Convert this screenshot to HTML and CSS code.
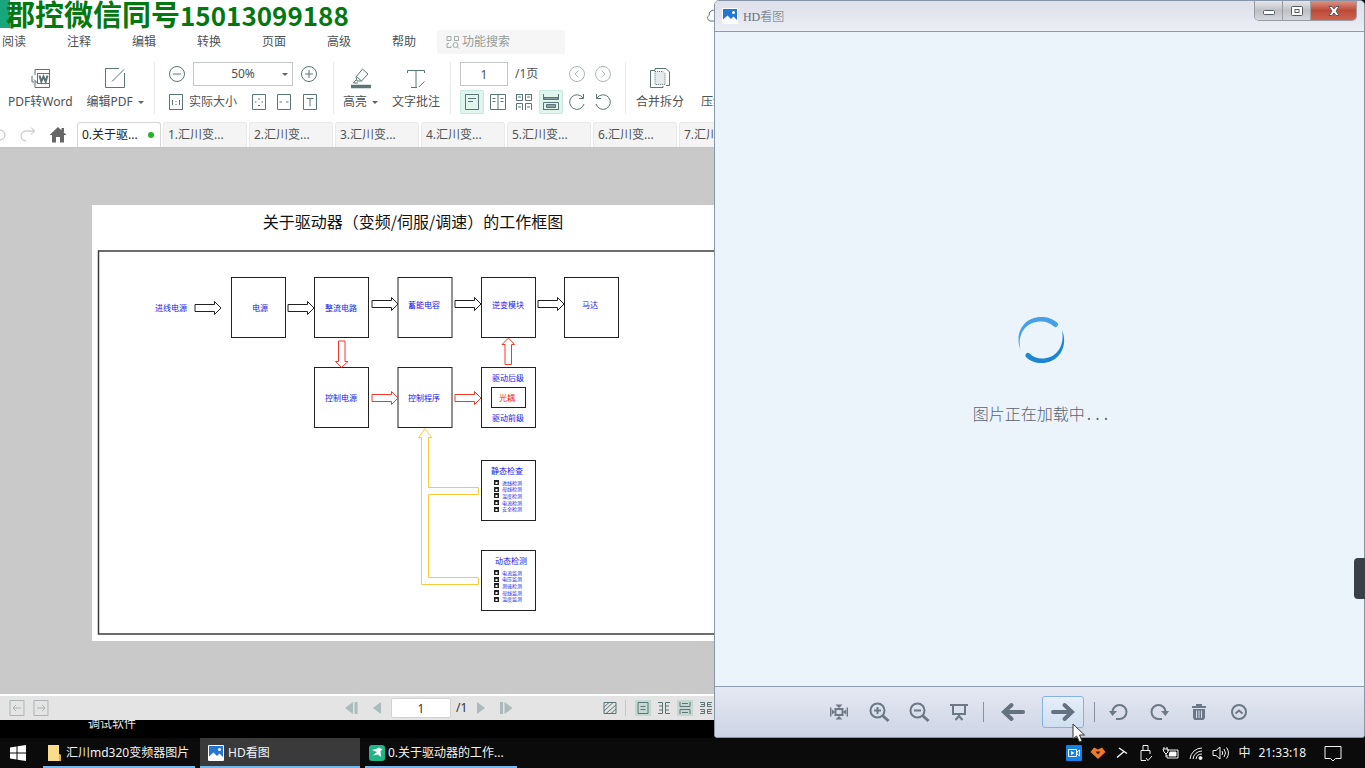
FILE: index.html
```html
<!DOCTYPE html>
<html lang="zh-CN">
<head>
<meta charset="utf-8">
<title>HD看图</title>
<link rel="stylesheet" href="styles.css">
</head>
<body>
<svg class="defs" aria-hidden="true">
  <defs>
    <symbol id="arrow" viewBox="0 0 28 16"><path d="M1 4.5H20.500V1.500L27 8L20.500 14.500V11.500H1Z"/></symbol>
    <symbol id="picture" viewBox="0 0 16 16"><rect fill="#fff" x="0" y="0" width="16" height="16" rx="1"/><path fill="#2377d0" d="M1 1H15V12L11.500 8.500L9 11L5.500 7.500L1 11.500Z"/><circle fill="#fff" cx="11.500" cy="4.500" r="1.500"/></symbol>
  </defs>
</svg>
<main class="desktop">
  <span class="desktop-label">调试软件</span>

  <section class="pdf">
    <header class="pdf-title">
      <span class="pdf-brand"></span>
      <h1 class="banner">郡控微信同号<span class="banner-num">15013099188</span></h1>
      <svg class="cloud" width="14" height="14" viewBox="0 0 14 14"><path d="M14 12H4A3 3 0 0 1 3 6.500A5 5 0 0 1 12 3"/></svg>
    </header>
    <nav class="menu">
      <a href="#">阅读</a><a href="#">注释</a><a href="#">编辑</a><a href="#">转换</a><a href="#">页面</a><a href="#">高级</a><a href="#">帮助</a>
      <label class="search">
        <svg width="14" height="14" viewBox="0 0 14 14"><path d="M1 1.500H5V5.500H1ZM8.500 1.500H12.500V5.500H8.500ZM3 8.500H1V12.500H5V11M11 11.500L13 13.500"/><circle cx="9.500" cy="10" r="2.500"/></svg>
        <input type="text" placeholder="功能搜索" aria-label="功能搜索">
      </label>
    </nav>
    <div class="tools">
      <div class="group g-file">
        <button class="big"><svg width="24" height="24" viewBox="0 0 24 24"><path d="M7 9V3.500H21.500V21.500H7V18M4 10V16H8M6 13.500L8.500 16L6 18.500"/><rect x="9.500" y="7.500" width="12" height="10" fill="#fff"/><path stroke-width="2" d="M11.500 9.500L13.300 15.500L15.500 10.500L17.700 15.500L19.500 9.500"/></svg><span>PDF转Word</span></button>
        <button class="big"><svg width="24" height="24" viewBox="0 0 24 24"><path d="M16 2.500H2.500V21.500H21.500V7M9 15.500L21 3.500"/></svg><span>编辑PDF <i class="caret"></i></span></button>
      </div>
      <div class="group g-zoom rows">
        <div class="row">
          <button aria-label="缩小"><svg width="18" height="18" viewBox="0 0 18 18"><circle cx="9" cy="9" r="7.500"/><path d="M5 9H13"/></svg></button>
          <span class="zoom"><select aria-label="缩放"><option>50%</option></select><i class="caret"></i></span>
          <button aria-label="放大"><svg width="18" height="18" viewBox="0 0 18 18"><circle cx="9" cy="9" r="7.500"/><path d="M5 9H13M9 5V13"/></svg></button>
        </div>
        <div class="row">
          <button class="actual"><svg width="16" height="16" viewBox="0 0 16 16"><path d="M1.500 .5H14.500V15.500H1.500ZM4.500 6V11M11.500 6V11M8 7V8M8 10V11"/></svg>实际大小</button>
          <button aria-label="适合页面"><svg width="16" height="16" viewBox="0 0 16 16"><path d="M1.500 .5H14.500V15.500H1.500ZM7 5H9M7 11.500H9M4 8H5.500M10.500 8H12"/></svg></button>
          <button aria-label="适合宽度"><svg width="16" height="16" viewBox="0 0 16 16"><path d="M1.500 .5H14.500V15.500H1.500ZM3.500 8H6M10 8H12.500"/></svg></button>
          <button aria-label="适合文字"><svg width="16" height="16" viewBox="0 0 16 16"><path d="M1.500 .5H14.500V15.500H1.500ZM4.500 4.500H11.500M8 4.500V12.500"/></svg></button>
        </div>
      </div>
      <div class="group g-mark">
        <button class="big"><svg width="24" height="24" viewBox="0 0 24 24"><path d="M7 11L13.500 3L19 8L12.500 15H8ZM8 11L12.500 15M7 14L4.500 17H9"/><path stroke-width="3.500" d="M2 20.500H22"/></svg><span>高亮 <i class="caret"></i></span></button>
        <button class="big"><svg width="24" height="24" viewBox="0 0 24 24"><path d="M3.500 7V4.500H20.500V7M12 4.500V21.500M7 21.500H13M15 21L20.500 15.500"/></svg><span>文字批注</span></button>
      </div>
      <div class="group g-page rows">
        <div class="row">
          <input class="page-no" type="text" value="1" aria-label="页码"><span class="page-total">/1页</span>
          <span class="turns">
            <button class="faint" aria-label="上一页"><svg width="18" height="18" viewBox="0 0 18 18"><circle cx="9" cy="9" r="7.500"/><path d="M10.500 5.500L7 9L10.500 12.500"/></svg></button>
            <button class="faint" aria-label="下一页"><svg width="18" height="18" viewBox="0 0 18 18"><circle cx="9" cy="9" r="7.500"/><path d="M7.500 5.500L11 9L7.500 12.500"/></svg></button>
          </span>
        </div>
        <div class="row modes">
          <button class="on" aria-label="单页"><svg width="16" height="18" viewBox="0 0 16 18"><path d="M1.500 1.500H14.500V16.500H1.500ZM4 5.500H12M4 8.500H9"/></svg></button>
          <button aria-label="双页"><svg width="18" height="18" viewBox="0 0 18 18"><path d="M1.500 1.500H16.500V16.500H1.500ZM9 1.500V16.500M3.500 5.500H6.500M3.500 8.500H6.500M11.500 5.500H14.500M11.500 8.500H14.500"/></svg></button>
          <button aria-label="双页连续"><svg width="18" height="18" viewBox="0 0 18 18"><path d="M1.500 1V7.500H7.500V1M10.500 1V7.500H16.500V1M1.500 17V10.500H7.500V17M10.500 17V10.500H16.500V17M3 4H6M12 4H15M3 14H6M12 14H15M1 1.500H8M10 1.500H17"/></svg></button>
          <button class="on" aria-label="连续"><svg width="18" height="18" viewBox="0 0 18 18"><path d="M1.500 1V6.500H16.500V1M1.500 17V9.500H16.500V17M1.500 16.500H16.500"/><path fill="#8aa3a2" d="M2 4.500H16V6.500H2ZM4.500 11.500H13.500V14.500H4.500Z"/></svg></button>
          <button aria-label="顺时针"><svg width="18" height="18" viewBox="0 0 18 18"><path d="M15 5A7.300 7.300 0 1 0 16 11M15.500 1V5.500H11"/></svg></button>
          <button aria-label="逆时针"><svg width="18" height="18" viewBox="0 0 18 18"><path d="M3 5A7.300 7.300 0 1 1 2 11M2.500 1V5.500H7"/></svg></button>
        </div>
      </div>
      <div class="group g-merge">
        <button class="big"><svg width="24" height="24" viewBox="0 0 24 24"><path d="M7 4V2.500H18L21.500 6V19.500H18M7 4.500H2.500V21.500H15V20"/><path fill="#e6eaea" stroke-dasharray="1 1" d="M7 5.500H15L17 7.500V18.500H7Z"/></svg><span>合并拆分</span></button>
        <button class="big"><svg width="24" height="24" viewBox="0 0 24 24"></svg><span>压缩</span></button>
      </div>
    </div>
    <div class="tabs">
      <button aria-label="撤销" class="undo"><svg width="6" height="18" viewBox="0 0 6 18"><path d="M0 4A5 5 0 0 1 0 14"/></svg></button>
      <button aria-label="重做" class="redo"><svg width="18" height="18" viewBox="0 0 18 18"><path d="M16 5H8A5 5 0 0 0 8 15M13 1.500L16.500 5L13 8.500"/></svg></button>
      <button aria-label="首页" class="home"><svg width="18" height="18" viewBox="0 0 18 18"><path d="M9 1L17.500 9H15V16.500H11V11H7V16.500H3V9H.5ZM12.500 2H15V6H12.500Z"/></svg></button>
      <a class="tab active" href="#">0.关于驱...<i class="dot"></i></a>
      <a class="tab" href="#">1.汇川变...</a>
      <a class="tab" href="#">2.汇川变...</a>
      <a class="tab" href="#">3.汇川变...</a>
      <a class="tab" href="#">4.汇川变...</a>
      <a class="tab" href="#">5.汇川变...</a>
      <a class="tab" href="#">6.汇川变...</a>
      <a class="tab" href="#">7.汇川变...</a>
    </div>
    <div class="canvas">
      <svg class="sheet" width="640" height="436" viewBox="92 205 640 436">
        <text class="t-title" x="413" y="228">关于驱动器（变频/伺服/调速）的工作框图</text>
        <rect class="frame" x="98.500" y="251" width="650" height="383"/>
        <g class="box">
          <rect x="231.500" y="277.500" width="54" height="60"/>
          <rect x="314.500" y="277.500" width="54" height="60"/>
          <rect x="398" y="277.500" width="54" height="60"/>
          <rect x="481.500" y="277.500" width="54" height="60"/>
          <rect x="564.500" y="277.500" width="54" height="60"/>
          <rect x="314.500" y="367.500" width="54" height="60"/>
          <rect x="398" y="367.500" width="54" height="60"/>
          <rect x="481.500" y="367.500" width="54" height="60"/>
          <rect x="491.500" y="387.500" width="34" height="20"/>
          <rect x="481.500" y="460.500" width="54" height="60"/>
          <rect x="481.500" y="550.500" width="54" height="60"/>
          <use href="#arrow" x="194" y="300" width="28" height="16"/>
          <use href="#arrow" x="287" y="300" width="28" height="16"/>
          <use href="#arrow" x="371" y="296" width="28" height="16"/>
          <use href="#arrow" x="454" y="296" width="28" height="16"/>
          <use href="#arrow" x="537" y="296" width="28" height="16"/>
        </g>
        <g class="red">
          <use href="#arrow" x="371" y="390" width="28" height="16"/>
          <use href="#arrow" x="454" y="390" width="28" height="16"/>
          <path d="M338.500 341V361.500H335.500L341.500 367.500L348 361.500H345V341Z"/>
          <path d="M505 364.500V344.500H502L508.500 338L514.500 344.500H511.500V364.500Z"/>
        </g>
        <path class="yellow" d="M425 428.500L431.500 437.500H428.500V487.500H478.500V494.500H428.500V577.500H478.500V584.500H421.500V437.500H418.500Z"/>
        <g class="t-node">
          <text x="171" y="311">进线电源</text><text x="260" y="311">电源</text><text x="341" y="311">整流电路</text>
          <text x="424" y="308">蓄能电容</text><text x="508" y="308">逆变模块</text><text x="590" y="308">马达</text>
          <text x="341" y="401">控制电源</text><text x="424" y="401">控制程序</text>
          <text x="508" y="381">驱动后级</text><text class="t-red" x="507" y="401">光耦</text><text x="508" y="421">驱动前级</text>
          <text x="507" y="474">静态检查</text><text x="511" y="564">动态检测</text>
        </g>
        <path class="ticks" d="M494 480h5v5h-5zM494 487h5v5h-5zM494 493h5v5h-5zM494 500h5v5h-5zM494 507h5v5h-5zM494 570h5v5h-5zM494 577h5v5h-5zM494 583h5v5h-5zM494 590h5v5h-5zM494 597h5v5h-5z"/>
        <path class="tick-holes" d="M495.500 482h2v2h-2zM495.500 489h2v2h-2zM495.500 495h2v2h-2zM495.500 502h2v2h-2zM495.500 509h2v2h-2zM495.500 572h2v2h-2zM495.500 579h2v2h-2zM495.500 585h2v2h-2zM495.500 592h2v2h-2zM495.500 599h2v2h-2z"/>
        <g class="t-item">
          <text x="502" y="485">进线检测</text><text x="502" y="491">母线检测</text><text x="502" y="498">温度检测</text><text x="502" y="505">电流检测</text><text x="502" y="511">安全检测</text>
          <text x="502" y="575">电流监测</text><text x="502" y="581">电压监测</text><text x="502" y="588">测速检测</text><text x="502" y="595">母线监测</text><text x="502" y="601">温度监测</text>
        </g>
      </svg>
    </div>
    <footer class="status">
      <div class="st-left">
        <button aria-label="后退"><svg width="16" height="16" viewBox="0 0 16 16"><path d="M1 .5H15V15.500H1ZM12 8H4M7 5L4 8L7 11"/></svg></button>
        <button aria-label="前进"><svg width="16" height="16" viewBox="0 0 16 16"><path d="M1 .5H15V15.500H1ZM4 8H12M9 5L12 8L9 11"/></svg></button>
      </div>
      <div class="st-nav">
        <button aria-label="首页"><svg width="14" height="12" viewBox="0 0 14 12"><path d="M8 0V12L0 6ZM9.500 0H12.500V12H9.500Z"/></svg></button>
        <button aria-label="上一页"><svg width="10" height="12" viewBox="0 0 10 12"><path d="M9 0V12L1 6Z"/></svg></button>
        <span class="st-page"><input type="text" value="1" aria-label="当前页">/1</span>
        <button aria-label="下一页"><svg width="10" height="12" viewBox="0 0 10 12"><path d="M1 0V12L9 6Z"/></svg></button>
        <button aria-label="末页"><svg width="14" height="12" viewBox="0 0 14 12"><path d="M5.500 0V12L13.500 6ZM1 0H4V12H1Z"/></svg></button>
      </div>
      <div class="st-view">
        <button class="hatch" aria-label="背景"><svg width="14" height="14" viewBox="0 0 14 14"><path d="M1 1.500H13V12.500H1ZM1 6L6 1.500M1 10L10 1.500M3 12.500L13 4M8 12.500L13 8"/></svg></button>
        <button class="on" aria-label="单页"><svg width="14" height="14" viewBox="0 0 14 14"><path d="M2 1.500H12V12.500H2ZM4.500 5.500H9.500M4.500 8.500H9.500"/></svg></button>
        <button aria-label="双页"><svg width="14" height="14" viewBox="0 0 14 14"><path d="M1 1.500H5.500V12.500H1M2 5H5M2 9H5M13 1.500H8.500V12.500H13M12 5H9M12 9H9"/></svg></button>
        <button class="on" aria-label="连续"><svg width="14" height="14" viewBox="0 0 14 14"><path d="M2 1V5.500H12V1M4 2.500H10M2 13V8.500H12V13M4 11.500H10"/></svg></button>
        <button aria-label="双页连续"><svg width="14" height="14" viewBox="0 0 14 14"><path d="M1 1.500H5.500V5.500H1M13 1.500H8.500V5.500H13M1 12.500H5.500V8.500H1M13 12.500H8.500V8.500H13M2 3.500H5M9 3.500H12M2 10.500H5M9 10.500H12"/></svg></button>
      </div>
    </footer>
  </section>

  <section class="viewer">
    <header class="v-title">
      <svg width="16" height="16"><use href="#picture"/></svg>
      <h2><span class="v-latin">HD</span>看图</h2>
      <div class="v-ctl">
        <button aria-label="最小化"><svg width="14" height="10" viewBox="0 0 14 10"><rect x="1.500" y="4.500" width="11" height="4" rx="1"/></svg></button>
        <button aria-label="最大化"><svg width="14" height="12" viewBox="0 0 14 12"><rect x="1.500" y="1.500" width="11" height="9" rx="1"/><rect x="5" y="4.500" width="4" height="3"/></svg></button>
        <button class="close" aria-label="关闭"><svg width="14" height="12" viewBox="0 0 14 12"><path d="M2 1.500H5L7 4L9 1.500H12L9 6L12 10.500H9L7 8L5 10.500H2L5 6Z"/></svg></button>
      </div>
    </header>
    <div class="v-body">
      <svg width="50" height="50" viewBox="0 0 50 50">
        <path fill="#47a0e6" d="M4.500 35C-2 18 8 2 25 2C32 2 37 4 41 7.500A2.400 2.400 0 0 1 38 11.500C34 8 30 6.500 25 6.500C9 6.500 1 20 4.500 35Z"/>
        <path fill="#1d86d2" d="M46 15C53 32 42 48 26 48C19 48 14 46 10.500 42.500A2.400 2.400 0 0 1 13.500 38.500C17 42 21 43.500 26 43.500C41 43.500 49 30 46 15Z"/>
      </svg>
      <p>图片正在加载中<span class="mono">...</span></p>
    </div>
    <footer class="v-tools">
      <button aria-label="原始尺寸"><svg width="20" height="20" viewBox="0 0 20 20"><rect class="ln" x="6.500" y="7" width="7" height="6"/><path d="M6.500 2.500H13.500L10 6ZM6.500 17.500H13.500L10 14ZM1 5.500V14.500H2.500V5.500ZM2 6.500L6 10L2 13.500ZM19 5.500V14.500H17.500V5.500ZM18 6.500L14 10L18 13.500Z"/></svg></button>
      <button aria-label="放大"><svg width="22" height="22" viewBox="0 0 22 22"><g class="ln"><circle cx="9.500" cy="9.500" r="7"/><path d="M6 9.500H13M9.500 6V13"/><path stroke-width="3" d="M14.500 14.500L20.500 20"/></g></svg></button>
      <button aria-label="缩小"><svg width="22" height="22" viewBox="0 0 22 22"><g class="ln"><circle cx="9.500" cy="9.500" r="7"/><path d="M6 9.500H13"/><path stroke-width="3" d="M14.500 14.500L20.500 20"/></g></svg></button>
      <button aria-label="幻灯片"><svg width="18" height="18" viewBox="0 0 18 18"><path class="ln" d="M0 2H18M3 2V11H15V2M9 11V14M5.500 17L9 13L12.500 17"/></svg></button>
      <i class="bar"></i>
      <button aria-label="上一张"><svg width="24" height="22" viewBox="0 0 24 22"><path class="thick" d="M22 11H3M10.500 4L3 11L10.500 18"/></svg></button>
      <button class="hover" aria-label="下一张"><svg width="24" height="22" viewBox="0 0 24 22"><path class="thick" d="M2 11H21M13.500 4L21 11L13.500 18"/></svg>
        <svg class="cursor" width="14" height="20" viewBox="0 0 14 20"><path d="M1 1V16L4.500 13L7.500 19L10 18L7.500 12H12.500Z"/></svg></button>
      <i class="bar after"></i>
      <button aria-label="左旋"><svg width="20" height="20" viewBox="0 0 20 20"><path class="ln" d="M3.500 10A7 7 0 1 1 10.500 17H7"/><path d="M0 9H8L3.500 14Z"/></svg></button>
      <button aria-label="右旋"><svg width="20" height="20" viewBox="0 0 20 20"><path class="ln" d="M16.500 10A7 7 0 1 0 9.500 17H13"/><path d="M20 9H12L16.500 14Z"/></svg></button>
      <button aria-label="删除"><svg width="16" height="18" viewBox="0 0 16 18"><path d="M1 3H15V5H1ZM5 1H11V3H5ZM2 6H14V15L12.500 17H3.500L2 15Z"/><path class="gap" d="M5.500 7.500V15M8 7.500V15M10.500 7.500V15"/></svg></button>
      <button aria-label="更多"><svg width="18" height="18" viewBox="0 0 18 18"><g class="ln"><circle cx="9" cy="9" r="7"/><path d="M5.500 10.500L9 7.500L12.500 10.500"/></g></svg></button>
    </footer>
    <i class="handle"></i>
  </section>
</main>

<footer class="taskbar">
  <button class="start" aria-label="开始"><svg width="18" height="18" viewBox="0 0 18 18"><path fill="#fff" d="M1 3.500L7.500 2.500V8.500H1ZM8.500 2.300L17 1V8.500H8.500ZM1 9.500H7.500V15.500L1 14.500ZM8.500 9.500H17V17L8.500 15.700Z"/></svg></button>
  <button class="task"><svg width="16" height="16" viewBox="0 0 16 16"><path fill="#fbdc8a" d="M1 0H12V9L14 10V16H1Z"/><path fill="#e5ae35" d="M12 9L14 10V16H12Z"/></svg>汇川md320变频器图片</button>
  <button class="task active"><svg width="16" height="16"><use href="#picture"/></svg>HD看图</button>
  <button class="task"><svg width="16" height="16" viewBox="0 0 16 16"><rect width="16" height="16" rx="3" fill="#1eb687"/><path fill="#fff" d="M3 5L7 4L10 2.500L13.500 4.500L11.500 6L12 12L9 9.500L4 10.500L8 7Z"/></svg>0.关于驱动器的工作...</button>
  <div class="tray">
    <button aria-label="录屏"><svg width="16" height="16" viewBox="0 0 16 16"><rect width="16" height="16" rx="1" fill="#1580e8" stroke="none"/><path d="M2.500 4.500H10.500V11.500H2.500ZM13.500 5V11L11 9V7Z"/><path fill="#fff" stroke="none" d="M5 6L8.500 8L5 10Z"/></svg></button>
    <button aria-label="助手"><svg width="16" height="16" viewBox="0 0 16 16"><path fill="#f07a2b" stroke="none" d="M4 2.500L8 4.500L12 2.500L15.500 7L8 14L.5 7Z"/><path fill="#3a1c08" stroke="none" d="M5.500 6.500H10.500L8 9.500Z"/></svg></button>
    <button aria-label="工具"><svg width="16" height="16" viewBox="0 0 16 16"><path stroke-width="1.500" d="M5 3L13 8.500M10 6.500L3 12.500"/></svg></button>
    <button aria-label="设备"><svg width="16" height="18" viewBox="0 0 16 18"><path d="M5 6V1.500H10V6M3 6.500H12V10M3 6.500V16.500H8M8 14L10 16.500L14 12"/></svg></button>
    <button aria-label="电源"><svg width="18" height="14" viewBox="0 0 18 14"><path d="M5 4H16V12H5V9M1 3H6V6L4 8L2 6ZM2 1V3M5 1V3M4 8V11"/><path fill="#fff" d="M8 6H14V10H7Z"/></svg></button>
    <button aria-label="网络"><svg width="16" height="16" viewBox="0 0 16 16"><path d="M2 14A12 12 0 0 1 14 3M5 14A9 9 0 0 1 14 6M8 14A6 6 0 0 1 14 9"/><circle cx="12.500" cy="13" r="1.500" fill="#fff"/></svg></button>
    <button aria-label="音量"><svg width="18" height="16" viewBox="0 0 18 16"><path d="M1 5.500H4L8 2V14L4 10.500H1ZM10 6Q11.500 8 10 10M12 4Q15 8 12 12M14.500 2.500Q18.500 8 14.500 13.500"/></svg></button>
    <button class="ime">中</button>
    <time>21:33:18</time>
    <button aria-label="通知" class="note"><svg width="18" height="18" viewBox="0 0 18 18"><path d="M1 2.500H17V14.500H11.500L9 17L6.500 14.500H1Z"/></svg></button>
  </div>
</footer>
</body>
</html>
```
FILE: styles.css
```css
* { box-sizing: border-box; }
body {
  margin: 0;
  height: 100vh;
  display: flex;
  flex-direction: column;
  background: #000;
  overflow: hidden;
  font: 12px/16px "Noto Sans", "Noto Sans CJK SC", sans-serif;
  color: #4d5254;
}
button, input, select { font: inherit; color: inherit; margin: 0; padding: 0; }
button { border: 0; background: none; display: flex; align-items: center; justify-content: center; flex: none; }
a { color: inherit; text-decoration: none; }
svg { display: block; flex: none; }
h1, h2, p { margin: 0; font-weight: 400; }
.defs { position: absolute; width: 0; height: 0; }

.desktop { flex: 1; position: relative; min-height: 0; }
.desktop-label { position: absolute; left: 88px; bottom: 6px; color: #e8e8e8; }

/* PDF editor window */
.pdf {
  position: absolute;
  inset: 0 47% 18px 0;
  display: flex;
  flex-direction: column;
  overflow: hidden;
  background: #fff;
}
.pdf svg { fill: none; stroke: #5b7475; }
.pdf-title { height: 28px; display: flex; flex: none; }
.pdf-brand { width: 10px; background: #18a77c; }
.banner {
  position: absolute;
  left: 6px;
  top: 0;
  font: 700 29px/26px "Noto Sans CJK SC", sans-serif;
  color: #047810;
  white-space: nowrap;
}
.banner-num { font-size: 26px; }
.cloud { margin: 9px 3px 0 auto; }

.menu { height: 28px; flex: none; display: flex; align-items: center; gap: 41px; padding-left: 2px; white-space: nowrap; }
.menu a { flex: none; }
.search {
  width: 128px;
  height: 24px;
  margin-left: -20px;
  padding-left: 9px;
  display: flex;
  align-items: center;
  gap: 2px;
  background: #f5f6f5;
  border-radius: 2px;
}
.search svg { stroke: #a3a9a8; }
.search input { width: 90px; border: 0; background: none; }
.search input::placeholder { color: #969c9a; opacity: 1; }

.tools { height: 66px; flex: none; display: flex; padding: 6px 0 8px; white-space: nowrap; }
.group { display: flex; flex: none; position: relative; }
.group + .group { border-left: 1px solid #e8e8e8; }
.g-file { width: 154px; padding-left: 8px; gap: 14px; }
.g-zoom { width: 179px; padding: 0 15px 0 13px; }
.g-mark { width: 117px; padding-left: 9px; gap: 14px; }
.g-page { width: 175px; padding: 0 10px 0 9px; }
.g-merge { padding-left: 10px; gap: 17px; }
.rows { flex-direction: column; gap: 4px; }
.row { height: 24px; display: flex; align-items: center; justify-content: space-between; }
.big { flex-direction: column; justify-content: flex-start; padding-top: 4px; gap: 4px; }
.big span { display: flex; align-items: center; gap: 5px; }
.caret { border: 3px solid transparent; border-top-color: #5d6667; border-bottom: 0; }
.zoom { position: relative; }
.zoom select {
  width: 100px;
  height: 24px;
  appearance: none;
  border: 1px solid #c3c7c7;
  border-radius: 0;
  background: #fff;
  text-align: center;
  text-align-last: center;
}
.zoom .caret { position: absolute; right: 5px; top: 11px; }
.actual { gap: 5px; margin-right: 4px; }
.page-no { width: 48px; height: 24px; border: 1px solid #c3c7c7; text-align: center; }
.page-total { margin-left: 7px; }
.turns { display: flex; gap: 8px; margin-left: auto; padding-right: 3px; }
.pdf .faint svg { stroke: #aeb6b6; }
.modes button { width: 24px; height: 24px; border-radius: 2px; }
.modes .on { background: #e0f5ee; box-shadow: inset 0 0 0 1px #c9e8df; }

.tabs { height: 26px; flex: none; display: flex; border-bottom: 1px solid #c4c4c4; white-space: nowrap; }
.undo { width: 6px; }
.redo { width: 42px; }
.home { width: 20px; margin-right: 9px; }
.pdf .undo svg, .pdf .redo svg { stroke: #b7bbbb; }
.pdf .home svg { fill: #666; stroke: none; }
.tab {
  width: 84px;
  flex: none;
  margin-right: 2px;
  padding-left: 4px;
  display: flex;
  align-items: center;
  background: #f4f4f4;
  border: 1px solid #e9e9e9;
  border-bottom: 0;
  border-radius: 3px 3px 0 0;
}
.tab.active { background: #fff; border-color: #d6d6d6; color: #222; }
.dot { width: 6px; height: 6px; border-radius: 50%; background: #24b324; margin: 0 6px 0 auto; }

.canvas { flex: 1; min-height: 0; background: #c9c9c9; padding: 57px 0 0 92px; overflow: hidden; }
.pdf .sheet { background: #fff; stroke: none; }
.sheet text { font-family: "Noto Sans CJK SC", sans-serif; }
.frame { stroke: #3c3c3c; stroke-width: 1.5; }
.box { stroke: #222; }
.red { stroke: #f0392b; }
.yellow { stroke: #f7cb3c; }
.ticks { fill: #222; }
.tick-holes { fill: #fff; }
.t-title { font-size: 16px; fill: #111; text-anchor: middle; }
.t-node { font-size: 8px; fill: #1018f0; text-anchor: middle; }
.t-red { fill: #f01818; }
.t-item { font-size: 5px; fill: #2028f0; }

.status { height: 26px; flex: none; display: flex; align-items: center; background: #e4e4e4; border-top: 2px solid #fff; color: #333; }
.st-left { display: flex; gap: 8px; padding-left: 9px; width: 345px; }
.pdf .st-left svg { stroke: #adb3b3; }
.st-nav { display: flex; align-items: center; gap: 13px; }
.pdf .st-nav svg { fill: #abbaba; stroke: none; }
.st-page { display: flex; align-items: center; gap: 5px; margin: 0 -4px; }
.st-page input { width: 60px; height: 20px; border: 1px solid #d2d2d2; border-radius: 2px; background: #fff; text-align: center; }
.st-view { display: flex; gap: 5px; padding-left: 89px; }
.st-view button { width: 16px; height: 16px; }
.st-view .on { background: #c5d9d2; }
.st-view .hatch { width: 24px; padding-right: 8px; margin-right: 4px; border-right: 1px solid #c6c6c6; }

/* image viewer window */
.viewer {
  position: absolute;
  inset: 0 0 0 52.300%;
  display: flex;
  flex-direction: column;
  background: #ebf3fb;
  border: 1px solid #8796a9;
  border-radius: 5px 5px 3px 3px;
}
.v-title {
  height: 31px;
  flex: none;
  display: flex;
  align-items: center;
  gap: 5px;
  padding-left: 7px;
  border-bottom: 1px solid #8e9caf;
  border-radius: 4px 4px 0 0;
  background: linear-gradient(#dde0e9, #eceef6);
  color: #66707c;
}
.v-title h2 { font: 300 12px/16px "Noto Sans CJK SC", sans-serif; }
.v-latin { font-family: "Liberation Serif", serif; }
.v-ctl { display: flex; align-self: flex-start; margin: 0 7px 0 auto; height: 20px; border: 1px solid #9a9ca4; border-top: 0; border-radius: 0 0 5px 5px; overflow: hidden; }
.v-ctl button { width: 28px; background: linear-gradient(#e6e6ea, #bfc0c6 50%, #d6d7dc); border-right: 1px solid #9a9ca4; }
.v-ctl svg { fill: #fff; stroke: #555b63; }
.v-ctl .close { width: 45px; border: 0; background: linear-gradient(#dc9285, #bd4a37 50%, #cf6350); }
.v-body { flex: 1; display: flex; flex-direction: column; align-items: center; justify-content: center; gap: 38px; padding: 22px 0 0 4px; }
.v-body p { font: 300 16px/20px "Noto Sans CJK SC", sans-serif; color: #59636f; }
.mono { font-family: "Liberation Mono", monospace; font-size: 14px; }
.v-tools {
  height: 51px;
  flex: none;
  display: flex;
  align-items: center;
  justify-content: center;
  gap: 18px;
  border-top: 1px solid #8e9caf;
  border-radius: 0 0 3px 3px;
  background: linear-gradient(#e5e9f3, #cdd4e5);
}
.v-tools button { width: 22px; }
.v-tools svg { fill: #6c7885; }
.v-tools .ln { fill: none; stroke: #6c7885; stroke-width: 2; }
.v-tools .thick { fill: none; stroke: #64717e; stroke-width: 4; stroke-linecap: round; }
.v-tools .gap { stroke: #d3d9e6; }
.v-tools .bar { width: 1px; height: 20px; margin-left: -5px; background: #87929f; }
.v-tools .bar.after { margin: 0 -5px 0 -8px; }
.v-tools .hover { position: relative; width: 42px; height: 32px; border: 1px solid #86b3dd; border-radius: 3px; background: linear-gradient(#e6eef9, #cfdff1); }
.v-tools .cursor { position: absolute; right: -3px; bottom: -16px; fill: #fff; stroke: #333; }
.handle { position: absolute; right: -1px; top: 557px; width: 11px; height: 41px; border-radius: 4px 0 0 4px; background: #3b4048; }

/* taskbar */
.taskbar { height: 30px; flex: none; display: flex; align-items: stretch; gap: 5px; background: #0b0b0b; color: #f2f2f2; white-space: nowrap; }
.start { width: 38px; padding-right: 2px; }
.task { min-width: 152px; justify-content: flex-start; gap: 3px; padding: 2px 4px 0; border-bottom: 2px solid #76b9ed; }
.task.active { min-width: 160px; padding-left: 8px; gap: 4px; background: #3a3a3a; }
.tray { margin-left: auto; display: flex; align-items: center; gap: 8px; padding-right: 23px; }
.tray svg { fill: none; stroke: #f2f2f2; }
.ime { width: 12px; }
.tray .note { margin-left: 10px; }
```
